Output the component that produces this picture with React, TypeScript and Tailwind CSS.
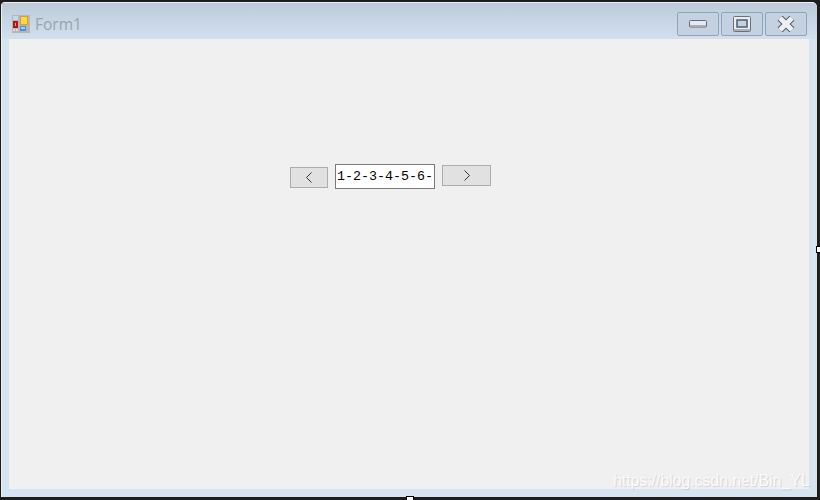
import React from "react";

const captionClass =
  "w-[42px] h-[24px] flex items-center justify-center rounded-[2px] border border-[#8fa3bb] bg-[#c3d1e0]";

const App = () => {
  return (
    <div className="relative w-[820px] h-[500px] bg-[#1d1d1d] overflow-hidden">
      {/* dark window frame */}
      <div className="w-[820px] h-[500px] pt-[2px] pb-[3px] pl-[1px] pr-[3px]">
        <div className="w-[816px] h-[495px] flex flex-col pl-[7px] pr-[8px] pb-[8px] rounded-tr-[5px] rounded-tl-[4px] border-l border-t border-[#eef2f7] bg-[#d6e3f1]">
          {/* title bar */}
          <div className="h-[36px] -ml-[7px] -mr-[8px] pl-[10px] pr-[10px] pt-[9px] flex items-start justify-between rounded-tr-[5px] bg-gradient-to-b from-[#bccbdb] to-[#d2dfed]">
            <div className="flex items-center gap-[5px] h-[24px]">
              <svg width="18" height="18" viewBox="0 0 18 18" className="shrink-0">
                <rect x="0" y="0" width="18" height="18" fill="#b3b7bb" />
                <rect x="1" y="1" width="5" height="4" fill="#cdd6e0" />
                <rect x="1" y="6" width="5" height="7" fill="#b3150f" />
                <rect x="3" y="8" width="1" height="3" fill="#f0a39d" />
                <rect x="1" y="14" width="2" height="2" fill="#d8dde3" />
                <rect x="4" y="14" width="2" height="2" fill="#d8dde3" />
                <rect x="8" y="1" width="8" height="9" fill="#d9a514" />
                <rect x="9" y="2" width="6" height="7" fill="#fbd650" />
                <rect x="8" y="11" width="6" height="5" fill="#4a8de0" />
                <rect x="9" y="12" width="4" height="2" fill="#a9cdf5" />
              </svg>
              <span className="mt-[2px] text-[15.5px] leading-none text-[#99a3ad] font-['Open_Sans',sans-serif]">Form1</span>
            </div>
            <div className="flex gap-[2px]">
              <div className={captionClass}>
                <svg width="18" height="8" viewBox="0 0 18 8">
                  <rect x="0.5" y="0.5" width="17" height="6.5" rx="1" fill="#e9e9ec" stroke="#5f6b7a" />
                  <rect x="1" y="5" width="16" height="1.5" fill="#a9aeb6" />
                </svg>
              </div>
              <div className={captionClass}>
                <svg width="18" height="16" viewBox="0 0 18 16">
                  <rect x="0.5" y="0.5" width="17" height="15" rx="1" fill="#ececee" stroke="#66727f" />
                  <rect x="4" y="4" width="10" height="7" fill="#c3d1e0" stroke="#4f5b6b" strokeWidth="1.5" />
                  <rect x="1" y="13" width="16" height="2" fill="#adb2ba" />
                </svg>
              </div>
              <div className={captionClass}>
                <svg width="18" height="16" viewBox="0 0 18 16">
                  <path d="M3 2 L15 14 M15 2 L3 14" stroke="#4f5b6b" strokeWidth="7" />
                  <path d="M3 2 L15 14 M15 2 L3 14" stroke="#efeff1" strokeWidth="5" />
                </svg>
              </div>
            </div>
          </div>

          {/* form client area */}
          <div className="flex-1 bg-[#f0f0f0] pl-[281px] pt-[125px] flex items-start gap-[7px] w-[800px]">
            <button className="mt-[3px] w-[38px] h-[21px] flex items-center justify-center bg-[#e1e1e1] border border-[#adadad]">
              <svg width="8" height="11" viewBox="0 0 8 11">
                <path d="M6.5 0.5 L1.5 5.5 L6.5 10.5" fill="none" stroke="#333" strokeWidth="1" />
              </svg>
            </button>
            <div className="w-[100px] h-[25px] flex items-center pl-[1px] bg-white border border-[#7a7a7a] text-[13.33px] leading-none text-black font-['Liberation_Mono',monospace] whitespace-nowrap overflow-hidden">
              1-2-3-4-5-6-
            </div>
            <button className="mt-[1px] w-[49px] h-[21px] flex items-center justify-center bg-[#e1e1e1] border border-[#adadad]">
              <svg width="8" height="11" viewBox="0 0 8 11">
                <path d="M1.5 0.5 L6.5 5.5 L1.5 10.5" fill="none" stroke="#333" strokeWidth="1" />
              </svg>
            </button>
          </div>
        </div>
      </div>

      {/* screenshot resize handles */}
      <div className="absolute left-[816px] top-[246px] w-[4px] h-[7px] bg-white border-y border-l border-black" />
      <div className="absolute left-[406px] top-[496px] w-[8px] h-[4px] bg-white border-t border-x border-black" />

      {/* watermark */}
      <div className="absolute left-[613px] top-[472px] text-[16px] tracking-[-0.1px] leading-[18px] text-[#fbfbfb] font-['Liberation_Sans',sans-serif] whitespace-nowrap [text-shadow:1px_1px_1px_rgba(170,170,170,0.45)]">
        https://blog.csdn.net/Bin_YL
      </div>
    </div>
  );
};

export default App;
